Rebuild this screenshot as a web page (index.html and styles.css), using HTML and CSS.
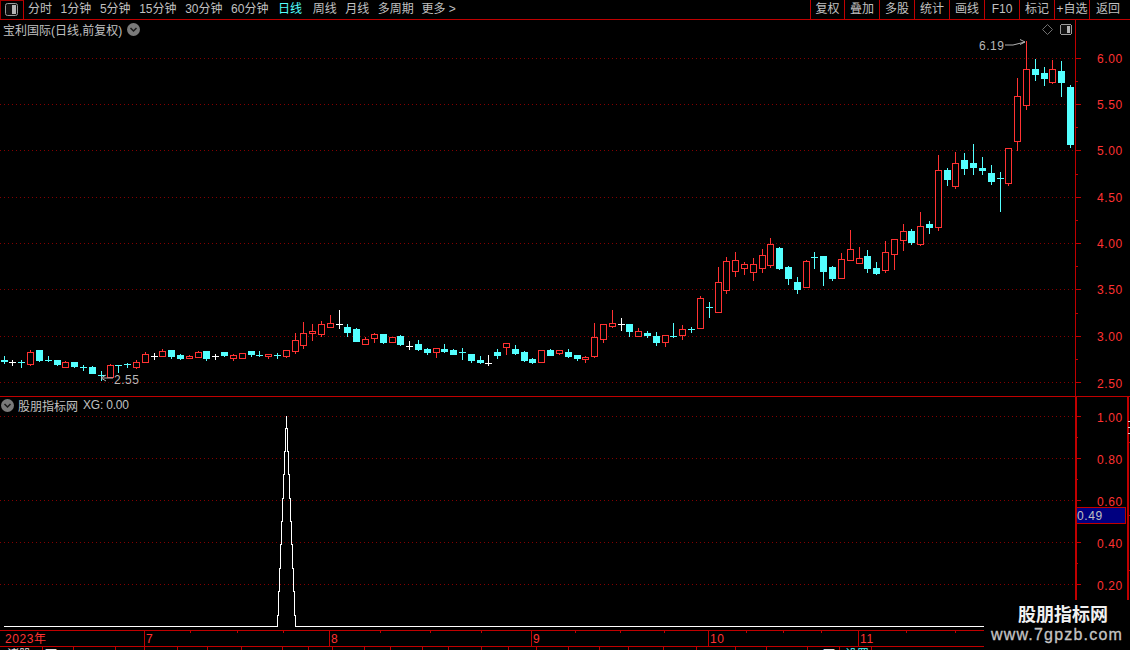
FILE: index.html
```html
<!DOCTYPE html>
<html lang="zh-CN">
<head>
<meta charset="utf-8">
<title>宝利国际 日线</title>
<link rel="stylesheet" href="styles.css">
</head>
<body>
<div class="app">
  <header class="toolbar">
    <div class="toggle">
      <svg width="14" height="14" viewBox="0 0 14 14"><rect x="0.5" y="0.5" width="12" height="12" rx="2" class="ico-frame"/><rect x="7" y="2" width="4" height="9" class="ico-fill"/></svg>
    </div>
    <nav class="tabs">
      <span>分时</span><span>1分钟</span><span>5分钟</span><span>15分钟</span><span>30分钟</span><span>60分钟</span>
      <span class="active">日线</span><span class="weekly">周线</span><span>月线</span><span>多周期</span><span class="more">更多 &gt;</span>
    </nav>
    <div class="actions">
      <button class="first">复权</button><button>叠加</button><button>多股</button><button>统计</button><button>画线</button><button>F10</button><button>标记</button><button>+自选</button><button class="last">返回</button>
    </div>
  </header>

  <section class="pane pane-main">
    <div class="plot">
      <svg id="candles" class="canvas" width="1075" height="376" viewBox="0 20 1075 376">
        <defs>
          <pattern id="dotted" width="4" height="1" patternUnits="userSpaceOnUse"><rect width="1" height="1" class="dot"/></pattern>
        </defs>
        <g class="dots">
          <rect y="58" width="1075" height="1"/><rect y="104" width="1075" height="1"/><rect y="150" width="1075" height="1"/><rect y="197" width="1075" height="1"/>
          <rect y="243" width="1075" height="1"/><rect y="289" width="1075" height="1"/><rect y="336" width="1075" height="1"/><rect y="382" width="1075" height="1"/>
        </g>
        <g id="bars"></g>
        <path class="mark" d="M1005 45H1013L1025 42M1020 39.5L1025 42L1020 44.5"/>
        <text class="mark-label" x="979" y="50">6.19</text>
        <path class="mark" d="M113 378H102M106 375L101 378L106 381"/>
        <text class="mark-label" x="114" y="384">2.55</text>
        <path class="diamond" d="M1047.5 24.5L1052.5 29.5L1047.5 34.5L1042.5 29.5Z"/>
        <rect x="1060.5" y="24.5" width="11" height="10" rx="2" class="ico-frame"/>
        <rect x="1067" y="26" width="3" height="7" class="ico-fill"/>
      </svg>
      <div class="legend legend-main">
        <span>宝利国际(日线,前复权)</span>
        <svg class="chev" width="13" height="13" viewBox="0 0 13 13"><circle cx="6.5" cy="6.5" r="6.5"/><path d="M3.5 5L6.5 8L9.5 5"/></svg>
      </div>
    </div>
    <svg class="scale" width="55" height="376" viewBox="1075 20 55 376">
      <path class="axis" d="M1075.5 20V396"/>
      <path class="axis" d="M1075 58.5H1081M1075 104.5H1081M1075 150.5H1081M1075 197.5H1081M1075 243.5H1081M1075 289.5H1081M1075 336.5H1081M1075 382.5H1081M1075 81.5H1078M1075 127.5H1078M1075 174.5H1078M1075 220.5H1078M1075 266.5H1078M1075 313.5H1078M1075 359.5H1078"/>
      <text x="1097" y="63">6.00</text><text x="1097" y="109">5.50</text><text x="1097" y="155">5.00</text><text x="1097" y="202">4.50</text>
      <text x="1097" y="248">4.00</text><text x="1097" y="294">3.50</text><text x="1097" y="341">3.00</text><text x="1097" y="388">2.50</text>
    </svg>
  </section>

  <section class="pane pane-sub">
    <div class="plot">
      <svg class="canvas" width="1075" height="233" viewBox="0 397 1075 233">
        <g class="dots">
          <rect y="416" width="1075" height="1"/><rect y="458" width="1075" height="1"/><rect y="500" width="1075" height="1"/><rect y="542" width="1075" height="1"/><rect y="584" width="1075" height="1"/>
        </g>
        <path class="spike" d="M4 626.5H277.5V615.5H278.5V591.5H279.5V568.5H280.5V544.5H281.5V521.5H282.5V498.5H283.5V474.5H284.5V451.5H285.5V428.5H286.5V416V428.5H287.5V451.5H288.5V474.5H289.5V498.5H290.5V521.5H291.5V544.5H292.5V568.5H293.5V591.5H294.5V615.5H295.5V626.5H1075"/>
      </svg>
      <div class="legend legend-sub">
        <svg class="chev" width="13" height="13" viewBox="0 0 13 13"><circle cx="6.5" cy="6.5" r="6.5"/><path d="M3.5 5L6.5 8L9.5 5"/></svg>
        <span class="name">股朋指标网</span><span class="xg">XG: 0.00</span>
      </div>
    </div>
    <svg class="scale" width="55" height="233" viewBox="1075 397 55 233">
      <path class="axis thick" d="M1076 397V630M1128 397V630"/>
      <path class="axis" d="M1075 416.5H1081M1075 458.5H1081M1075 500.5H1081M1075 542.5H1081M1075 584.5H1081M1075 437.5H1078M1075 479.5H1078M1075 521.5H1078M1075 563.5H1078M1075 605.5H1078M1127 442.5H1130M1127 515.5H1130M1127 570.5H1130"/>
      <path class="tick-light" d="M1128 421.5H1130M1128 427.5H1130M1128 433.5H1130"/>
      <text x="1097" y="422">1.00</text><text x="1097" y="464">0.80</text><text x="1097" y="506">0.60</text>
      <text x="1097" y="548">0.40</text><text x="1097" y="590">0.20</text>
      <rect class="cursor-box" x="1076.5" y="507.5" width="49" height="16"/>
      <text class="cursor-text" x="1077" y="520">0.49</text>
    </svg>
  </section>

  <svg class="timeaxis" width="1130" height="17" viewBox="0 630 1130 17">
    <path class="axis" d="M0 630.5H1130M0 646.5H1130"/>
    <path class="axis" d="M144.5 630V646M329.5 630V646M531.5 630V646M708.5 630V646M858.5 630V646"/>
    <path class="axis" d="M190.5 630V633M237.5 630V633M283.5 630V633M380.5 630V633M430.5 630V633M481.5 630V633M575.5 630V633M620.5 630V633M664.5 630V633M746.5 630V633M783.5 630V633M821.5 630V633M906.5 630V633M955.5 630V633"/>
    <text x="5" y="643">2023年</text><text x="146" y="643">7</text><text x="331" y="643">8</text><text x="533" y="643">9</text><text x="710" y="643">10</text><text x="860" y="643">11</text>
  </svg>

  <svg class="statusbar" width="1130" height="3" viewBox="0 647 1130 3">
    <path class="axis" d="M42.5 647V650M73.5 647V650M115.5 647V650M144.5 647V650M177.5 647V650M207.5 647V650M241.5 647V650M282.5 647V650M308.5 647V650M332.5 647V650M364.5 647V650M390.5 647V650M422.5 647V650M448.5 647V650M481.5 647V650M508.5 647V650M536.5 647V650M568.5 647V650M599.5 647V650M628.5 647V650M663.5 647V650M696.5 647V650M735.5 647V650M766.5 647V650M807.5 647V650M839.5 647V650M871.5 647V650"/>
    <text class="st-w" x="7" y="659">诸股</text><text class="st-w" x="45" y="659">下</text><text class="st-w" x="823" y="659">下</text><text class="st-c" x="845" y="659">设置</text>
  </svg>

  <aside class="watermark">
    <div class="wm-title">股朋指标网</div>
    <div class="wm-url">www.7gpzb.com</div>
  </aside>
</div>
<script src="chart.js"></script>
</body>
</html>
```

FILE: styles.css
```css
* { box-sizing: border-box; }
html, body { margin: 0; padding: 0; background: #000; }
body {
  width: 1130px;
  height: 650px;
  overflow: hidden;
  font-family: "Liberation Sans", "Noto Sans CJK SC", sans-serif;
  font-size: 12px;
  color: #c0c0c0;
}
svg { display: block; }
.app { position: relative; width: 1130px; height: 650px; display: flex; flex-direction: column; }

.toolbar {
  height: 20px;
  flex: none;
  display: flex;
  align-items: stretch;
  border-bottom: 1px solid #c00000;
  line-height: 19px;
}
.toggle {
  width: 24px;
  border: 1px solid #a00000;
  border-bottom: 0;
  border-right-color: #c00000;
  padding: 2px 0 0 4px;
}
.ico-frame { fill: #111; stroke: #9a9a9a; stroke-width: 1; }
.ico-fill { fill: #b4b4b4; }
.tabs { display: flex; gap: 8.6px; padding-left: 4px; white-space: nowrap; }
.tabs .active { color: #54ffff; margin-left: 1px; }
.tabs .weekly { margin-left: 2px; }
.tabs .more { margin-left: -1px; }
.actions { margin-left: auto; display: flex; }
.actions button {
  width: 35px;
  padding: 0;
  border: 0;
  border-left: 1px solid #c00000;
  background: #000;
  color: #c0c0c0;
  font: inherit;
  line-height: 19px;
  white-space: nowrap;
}
.actions .first { width: 34px; }
.actions .last { width: 41px; text-align: left; padding-left: 6px; }

.pane { display: flex; flex: none; }
.pane-main { height: 376px; box-shadow: 0 1px 0 #c00000; }
.pane-sub { height: 233px; margin-top: 1px; }
.plot { position: relative; width: 1075px; height: 100%; }

.dot { fill: #840000; }
.dots rect { fill: url(#dotted); }
.canvas { shape-rendering: crispEdges; }
.mark { fill: none; stroke: #b0b0b0; stroke-width: 1; shape-rendering: auto; }
.mark-label { fill: #b8b8b8; font-size: 12px; letter-spacing: .5px; }
.diamond { fill: none; stroke: #707070; shape-rendering: auto; }
.spike { fill: none; stroke: #fff; stroke-width: 1; }

.up { fill: #000; stroke: #ff3232; stroke-width: 1; }
.down { fill: #54ffff; }
.flat-w { fill: #fff; }
.wick-up { fill: #ff3232; }
.wick-down { fill: #54ffff; }

.legend { position: absolute; left: 0; display: flex; align-items: center; white-space: nowrap; }
.legend-main { top: 2px; left: 3px; gap: 5px; height: 14px; }
.legend-sub { top: 1px; left: 1px; height: 14px; }
.legend-sub .name { margin-left: 4px; }
.legend-sub .xg { margin-left: 5px; letter-spacing: -.2px; }
.chev circle { fill: #7a7a7a; }
.chev path { fill: none; stroke: #1a1a1a; stroke-width: 1.5; }

.scale { flex: none; background: #000; }
.axis { fill: none; stroke: #c00000; stroke-width: 1; shape-rendering: crispEdges; }
.axis.thick { stroke-width: 2; }
.tick-light { stroke: #d0d0d0; stroke-width: 1; shape-rendering: crispEdges; }
.scale text, .timeaxis text { fill: #ff3232; font-size: 12px; letter-spacing: .6px; }
.cursor-box { fill: #000080; stroke: #c00000; stroke-width: 1; shape-rendering: crispEdges; }
.scale .cursor-text { fill: #c0c0c0; }

.timeaxis, .statusbar { flex: none; }
.statusbar text { font-size: 12px; }
.st-w { fill: #e0e0e0; }
.st-c { fill: #54ffff; }

.watermark {
  position: absolute;
  right: 0;
  bottom: 0;
  width: 146px;
  height: 50px;
  background: #000;
  text-align: center;
}
.wm-title {
  margin-top: 4px;
  padding-left: 12px;
  font-size: 18px;
  line-height: 22px;
  font-weight: 700;
  color: #f0f0f0;
}
.wm-url {
  font-size: 16px;
  line-height: 17px;
  margin-top: 0;
  letter-spacing: 1.2px;
  font-weight: 400;
  -webkit-text-stroke: .3px #c4c4c4;
  color: #c4c4c4;
}
```

FILE: chart.js
```js
// x, kind (c = falling, r = rising, w = flat), wick top, body top, body bottom, wick bottom
var data = [
[4.3,'c',356,360,361,363],[12.7,'w',360,362,362,365],[21,'c',360,362,362,367],[30.3,'r',350,352,364,365],
[39.3,'c',350,350,360,361],[48,'c',356,360,360,361],[57,'c',360,360,364,365],[65.3,'r',361,362,367,367],
[74.3,'c',362,362,366,367],[83.3,'c',365,367,367,370],[92.3,'c',366,367,373,373],[101.3,'c',371,375,375,380],
[110.3,'r',364,365,377,377],[118.7,'c',365,365,365,372],[127.3,'c',363,364,364,367],[136.3,'r',360,362,367,368],
[145.3,'r',352,354,362,362],[154,'w',353,356,356,359],[162.3,'r',349,351,356,356],[171.3,'c',350,350,356,358],
[180.3,'c',354,355,358,359],[189.3,'r',355,356,358,358],[198.3,'r',351,352,357,357],[206.3,'c',351,351,358,360],
[215,'w',354,356,356,359],[224.3,'c',352,352,355,356],[233.3,'r',354,355,358,360],[242.3,'r',353,353,358,358],
[251.3,'c',351,351,354,356],[259.7,'c',351,355,355,356],[268.7,'r',354,354,356,358],[277.3,'c',353,355,355,358],
[286.3,'r',350,350,356,357],[295.3,'r',333,340,351,353],
[303.3,'r',322,333,345,348],[312.3,'r',324,331,333,340],[321.3,'r',321,324,334,336],[330.3,'r',315,323,327,327],
[339.3,'w',310,324,324,328],[347.3,'c',324,327,332,336],[356.3,'c',328,329,341,341],[365.3,'r',337,339,344,344],
[374.3,'r',333,334,338,342],[383.3,'c',334,334,342,343],[392.3,'r',337,337,342,342],[400.3,'c',335,336,344,345],
[409,'w',341,346,346,349],[418.3,'c',340,344,349,350],[427.3,'c',348,349,352,354],[436.3,'r',348,348,352,357],
[444.3,'c',344,349,351,352],[453.3,'c',349,350,354,354],[462.3,'c',348,352,352,359],[471.3,'c',354,354,360,362],
[480.3,'c',356,360,362,363],[488.3,'w',355,363,363,365],[497.3,'c',349,352,355,358],[506.3,'r',343,343,347,354],
[515.3,'c',345,349,353,354],[524.3,'c',351,352,360,361],[532.3,'c',358,359,362,363],[541.3,'r',350,350,362,362],
[550.3,'c',349,350,355,355],[559.3,'r',350,350,353,354],[568.3,'c',349,352,356,357],[577.3,'c',355,355,358,360],
[585.3,'r',356,357,359,362],[594.3,'r',323,337,356,357],[603.3,'r',324,324,339,342],[612.3,'r',310,323,326,327],
[621.3,'w',318,324,324,330],[629.3,'c',324,324,331,336],[638.3,'r',328,331,336,336],[647.3,'c',331,333,335,337],
[656.3,'c',332,336,342,345],[665.3,'r',335,335,342,346],[673.3,'c',323,336,336,337],[682.3,'r',325,329,335,339],
[691.3,'c',327,329,329,332],[700.3,'r',296,298,328,328],[709.3,'c',302,307,307,317],[718.3,'r',267,282,312,312],
[726.3,'r',257,261,290,293],[735.3,'r',252,260,271,276],[744.3,'r',262,264,268,274],[753.3,'r',258,264,272,280],
[762.3,'r',249,255,268,272],[770.3,'r',238,244,265,267],[779.3,'c',247,248,268,269],[788.3,'c',266,267,278,284],
[797.3,'c',277,282,289,293],[806.3,'r',260,261,287,287],[814.3,'c',252,257,257,268],[823.3,'c',256,256,271,285],
[832.3,'c',266,267,278,280],[841.3,'r',253,259,278,278],[850.3,'r',230,249,260,260],[859.3,'r',247,258,263,263],
[867.3,'c',250,256,268,272],[876.3,'c',262,268,273,274],[885.3,'r',241,252,270,272],[894.3,'r',239,239,254,269],
[903.3,'r',224,231,240,250],[911.3,'c',229,231,242,244],[920.3,'r',212,226,244,245],[929.3,'c',221,224,227,233],
[938.3,'r',155,170,227,230],[947.3,'c',168,170,179,185],[955.3,'r',152,163,186,188],[964.3,'c',153,160,168,174],
[973.3,'c',144,163,167,174],[982.3,'c',157,168,170,174],[991.3,'c',165,173,181,184],[1000.3,'c',172,178,178,211],
[1008.3,'r',148,148,183,185],[1017.3,'r',78,96,141,150],[1026.3,'r',41,69,105,109],[1035.3,'c',59,69,74,80],
[1044.3,'c',67,73,78,85],[1052.3,'r',60,69,82,83],[1061.3,'c',61,71,82,96],[1070.3,'c',85,87,144,147]
];

var NS = 'http://www.w3.org/2000/svg';
var layer = document.getElementById('bars');

function rect(x, y, w, h, cls) {
  var r = document.createElementNS(NS, 'rect');
  r.setAttribute('x', x);
  r.setAttribute('y', y);
  r.setAttribute('width', w);
  r.setAttribute('height', h);
  r.setAttribute('class', cls);
  layer.appendChild(r);
}

data.forEach(function (d) {
  var x = Math.floor(d[0]), kind = d[1], wt = d[2], bt = d[3], bb = d[4], wb = d[5];
  var wick = kind === 'r' ? 'wick-up' : kind === 'c' ? 'wick-down' : 'flat-w';
  rect(x, wt, 1, wb - wt + 1, wick);
  if (bt === bb) {
    rect(x - 3, bt, 7, 1, wick);
  } else if (kind === 'r') {
    rect(x - 2.5, bt + 0.5, 6, bb - bt, 'up');
  } else {
    rect(x - 3, bt, 7, bb - bt + 1, 'down');
  }
});
```
